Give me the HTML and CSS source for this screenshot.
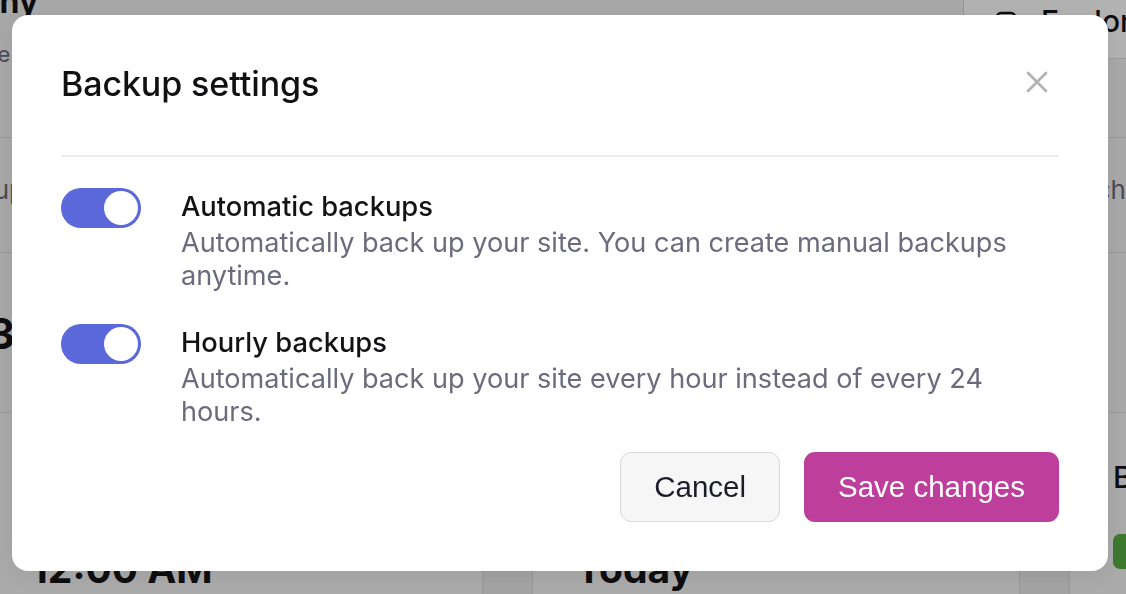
FILE: index.html
```html
<!DOCTYPE html>
<html lang="en">
<head>
<meta charset="utf-8">
<title>Backup settings</title>
<link rel="stylesheet" href="styles.css">
</head>
<body>
<div class="page">
  <section class="page-top">
    <div class="page-heading">
      <h1 class="page-title">Company</h1>
      <p class="page-sub">Site overview and settings</p>
    </div>
    <div class="page-tools">
      <div class="tool-bar">
        <svg class="tool-icon" viewBox="0 0 22 22" aria-hidden="true"><rect x="2" y="2" width="18" height="18" rx="4"/></svg>
        <span class="tool-label">Explore</span>
      </div>
    </div>
  </section>
  <section class="page-row row-info">
    <span class="muted lead">Last backup was made today</span>
    <span class="muted trail">Search</span>
  </section>
  <section class="page-row row-stat">
    <span class="stat">38 backups</span>
  </section>
  <section class="cards">
    <div class="card">
      <div class="card-label">Next backup</div>
      <div class="card-value">12:00 AM</div>
    </div>
    <div class="card">
      <div class="card-label">Last backup</div>
      <div class="card-value">Today</div>
    </div>
    <div class="card">
      <div class="card-label">Backups</div>
      <span class="badge">Active</span>
    </div>
  </section>
</div>

<div class="overlay">
  <div class="modal" role="dialog" aria-labelledby="modal-title">
    <header class="modal-head">
      <h2 class="modal-title" id="modal-title">Backup settings</h2>
      <button class="close" type="button" aria-label="Close">
        <svg viewBox="0 0 22 22" aria-hidden="true"><path d="M2 2L20 20M20 2L2 20"/></svg>
      </button>
    </header>
    <div class="modal-body">
      <div class="setting">
        <span class="toggle"><span class="knob"></span></span>
        <div class="setting-text">
          <div class="setting-label">Automatic backups</div>
          <div class="setting-desc">Automatically back up your site. You can create manual backups anytime.</div>
        </div>
      </div>
      <div class="setting">
        <span class="toggle"><span class="knob"></span></span>
        <div class="setting-text">
          <div class="setting-label">Hourly backups</div>
          <div class="setting-desc">Automatically back up your site every hour instead of every 24 hours.</div>
        </div>
      </div>
    </div>
    <footer class="modal-foot">
      <button class="btn btn-secondary" type="button">Cancel</button>
      <button class="btn btn-primary" type="button">Save changes</button>
    </footer>
  </div>
</div>
</body>
</html>
```

FILE: styles.css
```css
* { box-sizing: border-box; }

html, body {
  margin: 0;
  width: 1126px;
  height: 594px;
  overflow: hidden;
}

body {
  font-family: Inter, "Noto Sans", sans-serif;
  background: #f1f1f1;
  color: #141418;
}

/* ---------- background page ---------- */
.page {
  width: 1126px;
  height: 594px;
  overflow: hidden;
  display: flex;
  flex-direction: column;
}

.page-top {
  display: flex;
  height: 138px;
  border-bottom: 1px solid #dcdcdc;
  flex-shrink: 0;
}

.page-heading {
  width: 963px;
  flex-shrink: 0;
}

.page-title {
  margin: -18px 0 0 -112px;
  font-size: 32px;
  line-height: 40px;
  font-weight: 700;
  white-space: nowrap;
}

.page-sub {
  margin: 17px 0 0 -29px;
  font-size: 22px;
  line-height: 30px;
  color: #6b6b7d;
  white-space: nowrap;
}

.page-tools {
  flex: 1;
  border-left: 1px solid #d6d6d6;
}

.tool-bar {
  height: 59px;
  background: #ffffff;
  border-bottom: 1px solid #dcdcdc;
  display: flex;
  align-items: flex-start;
  padding: 1px 0 0 31px;
  white-space: nowrap;
}

.tool-icon {
  width: 22px;
  height: 22px;
  margin-top: 10px;
  fill: none;
  stroke: #141418;
  stroke-width: 2.4;
}

.tool-label {
  margin-left: 24px;
  font-size: 30px;
  line-height: 40px;
  font-weight: 500;
}

.page-row {
  display: flex;
  border-bottom: 1px solid #dcdcdc;
  flex-shrink: 0;
  white-space: nowrap;
}

.row-info {
  height: 115px;
  padding-top: 35px;
  justify-content: space-between;
}

.muted {
  font-size: 26px;
  line-height: 34px;
  color: #6b6b7d;
}

.lead { margin-left: -125px; }
.trail { margin-right: 0; }

.row-stat {
  height: 160px;
  padding-top: 56px;
}

.stat {
  margin-left: -12px;
  font-size: 42px;
  line-height: 50px;
  font-weight: 700;
}

.cards {
  flex: 1;
  display: grid;
  grid-template-columns: 496px 488px 488px;
  column-gap: 49px;
  margin-left: -13px;
  background: #e9e9e9;
}

.card {
  background: #f4f4f4;
  border-left: 1px solid #dadada;
  border-right: 1px solid #dadada;
  padding: 45px 43px 0;
}

.card-label {
  font-size: 30px;
  line-height: 38px;
  font-weight: 500;
  white-space: nowrap;
}

.card-value {
  margin-top: 52px;
  font-size: 39px;
  line-height: 42px;
  font-weight: 700;
  white-space: nowrap;
}

.badge {
  display: inline-block;
  margin-top: 38px;
  height: 35px;
  padding: 0 16px;
  border-radius: 7px;
  background: #57ad43;
  color: #ffffff;
  font-size: 20px;
  line-height: 35px;
}

/* ---------- modal ---------- */
.overlay {
  position: fixed;
  inset: 0;
  background: rgba(0, 0, 0, 0.3);
  display: flex;
  align-items: flex-start;
  justify-content: flex-start;
  padding: 15px 0 0 12px;
}

.modal {
  width: 1096px;
  background: #ffffff;
  border-radius: 16px;
  padding: 49px;
  box-shadow: 0 4px 24px rgba(0, 0, 0, 0.08);
}

.modal-head {
  display: flex;
  justify-content: space-between;
  align-items: flex-start;
  padding-bottom: 51px;
  border-bottom: 2px solid #ebebeb;
}

.modal-title {
  margin: 0;
  font-size: 34px;
  line-height: 40px;
  font-weight: 500;
  color: #111114;
  letter-spacing: -0.1px;
}

.close {
  width: 44px;
  height: 40px;
  margin-top: -2px;
  padding: 0;
  border: 0;
  background: transparent;
  display: flex;
  align-items: center;
  justify-content: center;
  cursor: pointer;
}

.close svg {
  width: 22px;
  height: 22px;
  fill: none;
  stroke: #b3b3b3;
  stroke-width: 2.8;
  stroke-linecap: round;
}

.modal-body {
  padding-top: 31px;
  display: flex;
  flex-direction: column;
  gap: 32px;
}

.setting {
  display: flex;
  align-items: flex-start;
  gap: 40px;
}

.toggle {
  flex-shrink: 0;
  width: 80px;
  height: 40px;
  border-radius: 20px;
  background: #5a68da;
  padding: 3px;
  display: flex;
  align-items: center;
  justify-content: flex-end;
}

.knob {
  width: 34px;
  height: 34px;
  border-radius: 50%;
  background: #ffffff;
}

.setting-text {
  max-width: 850px;
}

.setting-label {
  font-size: 27.3px;
  line-height: 38px;
  font-weight: 500;
  color: #131316;
}

.setting-desc {
  font-size: 27.1px;
  line-height: 33px;
  color: #6b6b7d;
}

.modal-foot {
  display: flex;
  justify-content: flex-end;
  gap: 24px;
  margin-top: 24px;
}

.btn {
  height: 70px;
  border-radius: 11px;
  font-family: "Liberation Sans", Arial, sans-serif;
  font-size: 29.5px;
  line-height: 1;
  cursor: pointer;
}

.btn-secondary {
  padding: 0 33px;
  background: #f6f6f7;
  border: 1.5px solid #d9d9d9;
  color: #1c1c2a;
}

.btn-primary {
  padding: 0 34px;
  background: #bd3f9b;
  border: 0;
  color: #ffffff;
}
```
